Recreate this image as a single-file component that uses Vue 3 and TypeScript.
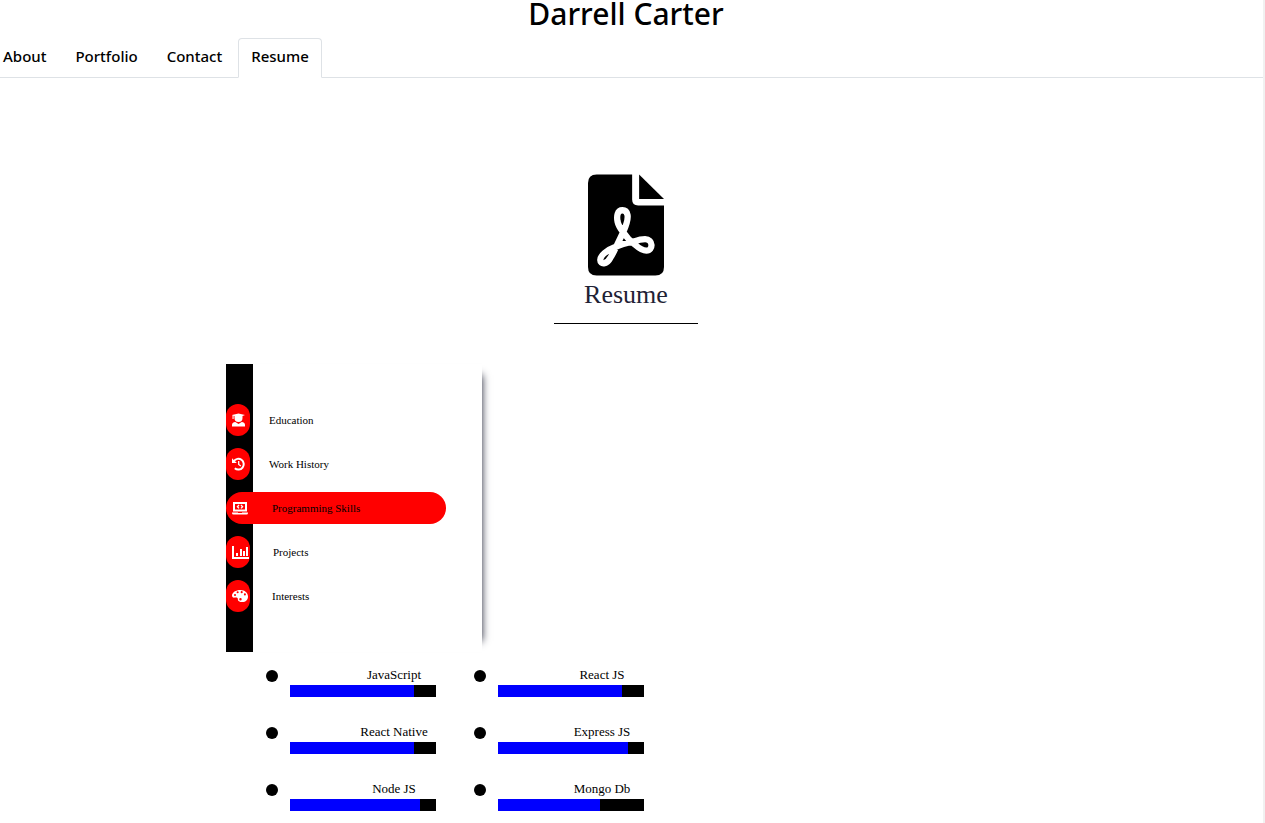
<script setup lang="ts">
import { ref } from 'vue'

interface Section {
  label: string
  icon: string
}

interface Skill {
  name: string
  percent: number
}

const tabs: string[] = ['About', 'Portfolio', 'Contact', 'Resume']
const activeTab = ref('Resume')

const sections: Section[] = [
  { label: 'Education', icon: 'graduate' },
  { label: 'Work History', icon: 'history' },
  { label: 'Programming Skills', icon: 'laptop' },
  { label: 'Projects', icon: 'chart' },
  { label: 'Interests', icon: 'palette' },
]
const activeSection = ref('Programming Skills')

const skills: Skill[] = [
  { name: 'JavaScript', percent: 85 },
  { name: 'React JS', percent: 85 },
  { name: 'React Native', percent: 85 },
  { name: 'Express JS', percent: 89 },
  { name: 'Node JS', percent: 89 },
  { name: 'Mongo Db', percent: 70 },
]
</script>

<template>
  <div class="page">
    <header>
      <h1 class="title">Darrell Carter</h1>
      <nav class="tabs">
        <a
          v-for="tab in tabs"
          :key="tab"
          href="#"
          class="tab"
          :class="{ active: tab === activeTab }"
          @click.prevent="activeTab = tab"
        >{{ tab }}</a>
      </nav>
    </header>

    <main class="resume">
      <div class="heading">
        <svg class="pdf" viewBox="0 0 229 305" aria-hidden="true">
          <path d="M26 0H133V76Q133 94 151 94H229V279Q229 305 203 305H26Q0 305 0 279V26Q0 0 26 0Z" />
          <path d="M154 0L229 74H154Z" />
          <path
            class="loop"
            d="M104 108C88 108 86 126 89 142C92 156 98 164 106 174C116 190 126 200 142 212C152 221 166 230 176 230C197 230 197 195 172 195C160 195 150 198 138 202C118 206 100 210 82 219C58 228 37 244 37 258C37 272 57 272 67 252C74 242 78 232 84 220L106 174C114 156 122 136 119 122C117 112 112 108 104 108Z"
          />
        </svg>
        <h2>Resume</h2>
        <hr />
      </div>

      <div class="menu">
        <button
          v-for="s in sections"
          :key="s.label"
          type="button"
          class="item"
          :class="{ active: s.label === activeSection }"
          @click="activeSection = s.label"
        >
          <svg v-if="s.icon === 'graduate'" class="icon narrow" viewBox="0 0 13 14" aria-hidden="true">
            <path d="M0 2L6.500 .5L13 2L10.500 3V5A4 4 0 0 1 2.500 5V3L1.600 2.800V6H.5V2.300Z" />
            <path d="M3.300 9L6.500 11L9.700 9Q13 9.300 13 12V13.500H0V12Q0 9.300 3.300 9Z" />
          </svg>
          <svg v-else-if="s.icon === 'history'" class="icon narrow" viewBox="0 0 13 14" aria-hidden="true">
            <path class="line" d="M1.800 4.200A5.400 5.400 0 1 1 2.800 11.300" />
            <path class="line thin" d="M6.700 4V7.400L8.800 9" />
            <path d="M0 1.200V6H4.800Z" />
          </svg>
          <svg v-else-if="s.icon === 'laptop'" class="icon" viewBox="0 0 16 14" aria-hidden="true">
            <path class="line" d="M2 9.500V2H14V9.500Z" />
            <path class="line thin" d="M7 4L5.400 5.700L7 7.400M9 4L10.600 5.700L9 7.400" />
            <path d="M0 11.500H6V12H10V11.500H16V12Q16 13.500 14.500 13.500H1.500Q0 13.500 0 12Z" />
          </svg>
          <svg v-else-if="s.icon === 'chart'" class="icon wide" viewBox="0 0 17 14" aria-hidden="true">
            <path d="M0 1H2V12H17V14H0ZM4 8H6V11H4ZM8 4H10V11H8ZM11 6H13V11H11ZM14 2H16V11H14Z" />
          </svg>
          <svg v-else class="icon" viewBox="0 0 17 14" aria-hidden="true">
            <path
              fill-rule="evenodd"
              d="M9 .5C13.500 .5 17 3.500 17 7.500C17 11 14.500 13.500 11 13.500C8 13.500 6 12.500 6.200 10.500C6.400 8.800 5 8.300 3.200 8.700C1 9.200 0 8 0 6.500C0 3 4 .5 9 .5ZM3.200 4.800A1.100 1.100 0 1 0 3.200 7A1.100 1.100 0 1 0 3.200 4.800ZM6 2A1.100 1.100 0 1 0 6 4.200A1.100 1.100 0 1 0 6 2ZM10.300 1.800A1.100 1.100 0 1 0 10.300 4A1.100 1.100 0 1 0 10.300 1.800ZM13.700 4.200A1.100 1.100 0 1 0 13.700 6.400A1.100 1.100 0 1 0 13.700 4.200ZM9 9.200A1.300 1.300 0 1 0 9 11.800A1.300 1.300 0 1 0 9 9.200Z"
            />
          </svg>
          <span>{{ s.label }}</span>
        </button>
      </div>

      <ul class="skills">
        <li v-for="skill in skills" :key="skill.name">
          <span class="name">{{ skill.name }}</span>
          <div class="bar">
            <div class="fill" :style="{ width: skill.percent + '%' }"></div>
          </div>
        </li>
      </ul>
    </main>
  </div>
</template>

<style>
body {
  background: #fff;
}
</style>

<style scoped>
.page {
  min-height: 100vh;
  box-sizing: border-box;
  border-right: 2px solid #f1f1f1;
  color: #000;
}

header,
.resume {
  margin-left: -11px;
}

header {
  font-family: 'Noto Sans', 'Open Sans', sans-serif;
  font-weight: 500;
}

.title {
  margin: 0 0 10px;
  font-size: 30px;
  line-height: 28px;
  font-weight: 500;
  text-align: center;
}

.tabs {
  display: flex;
  gap: 3px;
  padding-left: 1px;
  border-bottom: 1px solid #dee2e6;
}

.tab {
  margin-bottom: -1px;
  padding: 6px 12px 9px;
  border: 1px solid transparent;
  border-radius: 4px 4px 0 0;
  color: #000;
  font-size: 15px;
  line-height: 23px;
  text-decoration: none;
}

.tab.active {
  border-color: #dee2e6 #dee2e6 #fff;
  background: #fff;
}

.resume {
  padding-top: 96px;
  font-family: 'Liberation Serif', 'Times New Roman', serif;
}

.resume > * {
  box-sizing: border-box;
}

.heading {
  display: flex;
  flex-direction: column;
  align-items: center;
}

.pdf {
  width: 76px;
  height: 102px;
}

.loop {
  fill: none;
  stroke: #fff;
  stroke-width: 19;
}

h2 {
  margin: 4px 0 13px;
  color: #1f2235;
  font-size: 26px;
  font-weight: 400;
  line-height: 30px;
}

hr {
  width: 144px;
  margin: 0;
  border: 0;
  border-top: 1px solid #000;
}

.menu {
  display: flex;
  flex-direction: column;
  gap: 12px;
  width: 256px;
  margin: 40px 0 0 calc(50% - 400px);
  padding: 40px 0;
  background: linear-gradient(#000, #000) left / 27px 100% no-repeat #fff;
  box-shadow: 11px 0 8px -11px #1f2235;
}

.item {
  display: flex;
  align-items: center;
  gap: 24px;
  width: 24px;
  height: 32px;
  padding: 0 0 0 6px;
  border: 0;
  border-radius: 16px;
  background: #f00;
  color: #000;
  font-family: inherit;
  font-size: 11px;
  white-space: nowrap;
  cursor: pointer;
}

.item.active {
  width: 220px;
}

.icon {
  flex: none;
  width: 16px;
  height: 14px;
  fill: #fff;
}

.icon.narrow {
  width: 13px;
}

.icon.wide {
  width: 17px;
}

.line {
  fill: none;
  stroke: #fff;
  stroke-width: 2;
}

.line.thin {
  stroke-width: 1.3;
}

.skills {
  display: grid;
  grid-template-columns: 146px 146px;
  column-gap: 62px;
  row-gap: 27px;
  margin: 15px 0 0 calc(50% - 360px);
  padding: 0 0 0 24px;
  list-style: none;
}

.skills li {
  position: relative;
}

.skills li::before {
  content: '';
  position: absolute;
  left: -24px;
  top: 3px;
  width: 12px;
  height: 12px;
  border-radius: 50%;
  background: #000;
}

.name {
  display: block;
  padding-left: 62px;
  font-size: 13px;
  line-height: 16px;
  margin-bottom: 2px;
  text-align: center;
}

.bar {
  height: 12px;
  background: #000;
}

.fill {
  height: 100%;
  background: #00f;
}
</style>
